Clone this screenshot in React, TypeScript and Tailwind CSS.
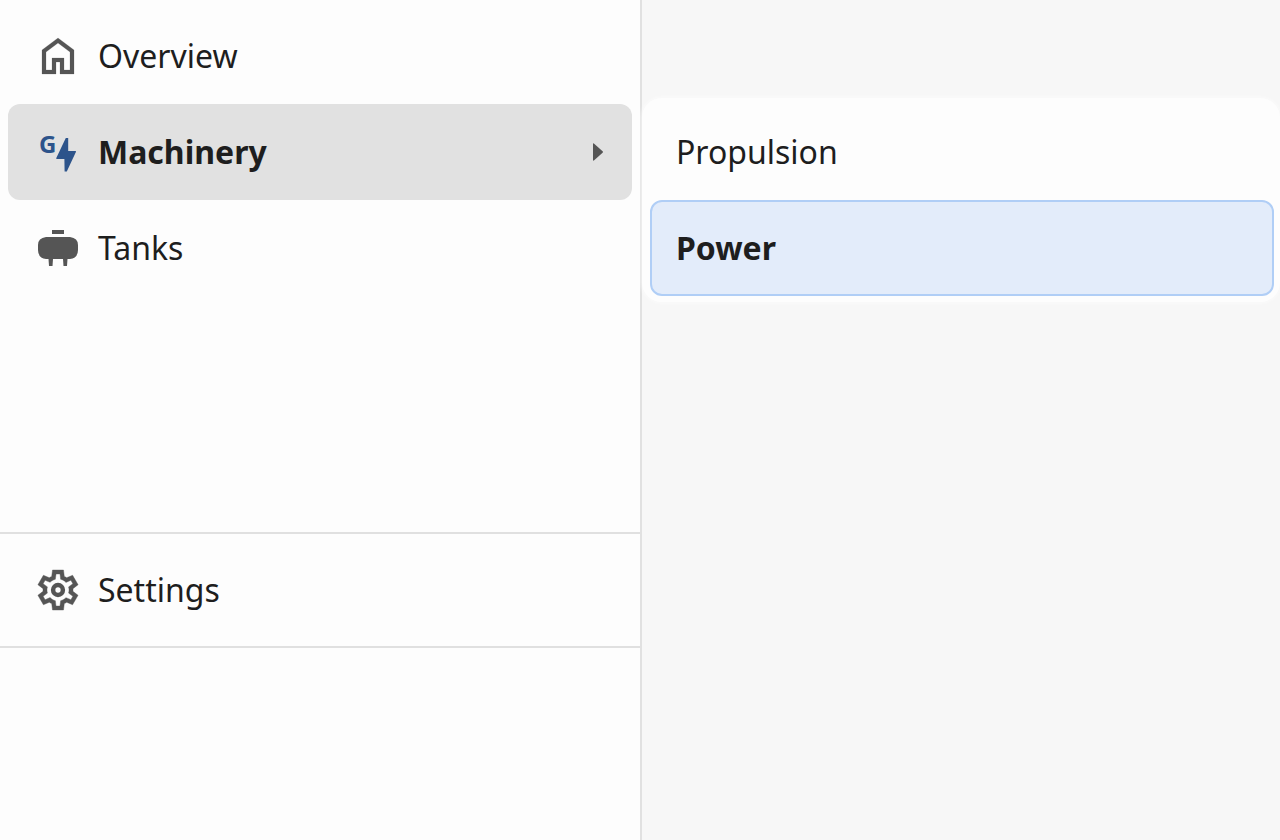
import React from "react";
import clsx from "clsx";

const HomeIcon = () => (
  <svg viewBox="0 0 24 24" className="size-12 shrink-0 fill-[#555555]" aria-hidden="true">
    <path
      d="M6 19h3v-6h6v6h3v-9l-6-4.500L6 10v9Zm-2 2V9l8-6 8 6v12h-7v-6h-2v6H4Z"
      stroke="#555555"
      strokeWidth=".1"
      strokeLinejoin="round"
    />
  </svg>
);

const MachineryIcon = () => (
  <svg viewBox="0 0 48 48" className="size-12 shrink-0 overflow-visible fill-[#2d548b]" aria-hidden="true">
    <text x="5" y="25" fontSize="24" fontWeight="700">
      G
    </text>
    <path d="M31.800 10h2.400v13h7.300q.8.200.4 1L32.800 43.400h-2.200L30.400 31h-7.600q-.9-.200-.5-1.100Z" />
  </svg>
);

const TankIcon = () => (
  <svg viewBox="0 0 48 48" className="size-12 shrink-0 fill-[#555555]" aria-hidden="true">
    <path d="M18 6h12v4H18Z" />
    <path d="M12 13h24q8 1 8 8v5q0 8-8 9h-2.500l-.5 7h-3.500l-.5-7H19l-.5 7H15l-.5-7H12q-8-1-8-9v-5q0-7 8-8Z" />
  </svg>
);

const SettingsIcon = () => (
  <svg viewBox="0 0 24 24" className="size-12 shrink-0 fill-[#555555] stroke-[#555555]" aria-hidden="true">
    <path
      d="m9.250 22-.4-3.200q-.325-.125-.612-.3-.288-.175-.563-.375L4.700 19.375l-2.750-4.750 2.575-1.950Q4.500 12.500 4.500 12.337v-.675q0-.162.025-.337L1.950 9.375l2.750-4.750 2.975 1.250q.275-.2.575-.375.3-.175.6-.3l.4-3.200h5.500l.4 3.200q.325.125.613.3.287.175.562.375l2.975-1.250 2.750 4.750-2.575 1.950q.025.175.025.338v.674q0 .163-.05.338l2.575 1.950-2.750 4.750-2.950-1.250q-.275.2-.575.375-.3.175-.6.3l-.4 3.200ZM11 20h1.975l.35-2.650q.775-.2 1.438-.588.662-.387 1.212-.937l2.475 1.025.975-1.700-2.150-1.625q.125-.35.175-.738.05-.387.05-.787t-.05-.788q-.05-.387-.175-.737l2.150-1.625-.975-1.700-2.475 1.050q-.55-.575-1.212-.963-.663-.387-1.438-.587L13 4h-1.975l-.35 2.650q-.775.2-1.437.587-.663.388-1.213.938L5.550 7.150l-.975 1.700 2.150 1.600q-.125.375-.175.75-.05.375-.05.8 0 .4.05.775t.175.75l-2.150 1.625.975 1.700 2.475-1.050q.55.575 1.213.963.662.387 1.437.587Z"
      fillRule="evenodd"
      strokeWidth=".2"
    />
    <circle cx="12" cy="12" r="2.450" fill="none" strokeWidth="2.250" />
  </svg>
);

const ArrowIcon = () => (
  <svg viewBox="0 0 10 18" className="h-[18px] w-2.5 shrink-0 fill-[#555555]" aria-hidden="true">
    <path d="M0 1q0-1 .9-.5L9.600 8.300q.7.700 0 1.400L.9 17.500q-.9.500-.9-.5Z" />
  </svg>
);

type NavItemProps = {
  label: string;
  icon: React.ReactNode;
  open?: boolean;
};

const NavItem = ({ label, icon, open }: NavItemProps) => (
  <button
    type="button"
    aria-expanded={open}
    className={clsx(
      "flex h-24 w-full items-center gap-4 rounded-xl pr-[29px] pl-[26px] text-left",
      open && "bg-[#e1e1e1] font-bold",
    )}
  >
    {icon}
    <span className="flex-1">{label}</span>
    {open && <ArrowIcon />}
  </button>
);

const SubItem = ({ label, active }: { label: string; active?: boolean }) => (
  <button
    type="button"
    className={clsx(
      "flex h-24 w-full items-center rounded-xl border-2 px-6 text-left",
      active ? "border-[#b0cef6] bg-[#e3ecfa] font-bold" : "border-transparent",
    )}
  >
    {label}
  </button>
);

const App = () => {
  return (
    <div className="flex min-h-screen bg-[#f7f7f7] font-['Noto_Sans',sans-serif] text-[32px] leading-10 text-[#1e1e1e]">
      <nav className="flex w-1/2 flex-col bg-[#fdfdfd]">
        <div className="flex-1 p-2">
          <NavItem label="Overview" icon={<HomeIcon />} />
          <NavItem label="Machinery" icon={<MachineryIcon />} open />
          <NavItem label="Tanks" icon={<TankIcon />} />
        </div>
        <div className="mb-48 border-y-2 border-[#e0e0e0] p-2">
          <NavItem label="Settings" icon={<SettingsIcon />} />
        </div>
      </nav>
      <main className="w-1/2 border-l-2 border-[#e1e1e1] pt-[98px]">
        <div className="rounded-[20px] bg-[#fdfdfd] py-1.5 pr-1.5 pl-2 shadow-[0_0_4px_#fdfdfd]">
          <SubItem label="Propulsion" />
          <SubItem label="Power" active />
        </div>
      </main>
    </div>
  );
};

export default App;
